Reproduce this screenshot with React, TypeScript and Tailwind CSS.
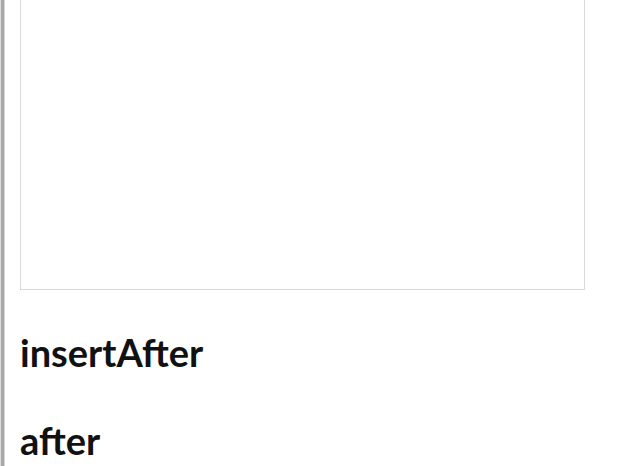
import React from 'react';

export default function App() {
  return (
    <div className="flex min-h-screen h-[466px] overflow-hidden bg-white">
      <div className="w-px bg-[#dcdcdc]" />
      <div className="w-[3px] bg-[#a9a9a9]" />
      <div className="w-px bg-[#d4d4d4]" />
      <div className="flex-1 pl-[15px]">
        <div className="h-[290px] w-[565px] border-x border-b border-[#d9d9d9] bg-white" />
        <h2
          className="mt-[40px] text-[38px] leading-[44px] font-bold text-[#111]"
          style={{ fontFamily: 'Lato, "Open Sans", sans-serif' }}
        >
          insertAfter
        </h2>
        <h2
          className="mt-[44px] text-[38px] leading-[44px] font-bold text-[#111]"
          style={{ fontFamily: 'Lato, "Open Sans", sans-serif' }}
        >
          after
        </h2>
      </div>
    </div>
  );
}
